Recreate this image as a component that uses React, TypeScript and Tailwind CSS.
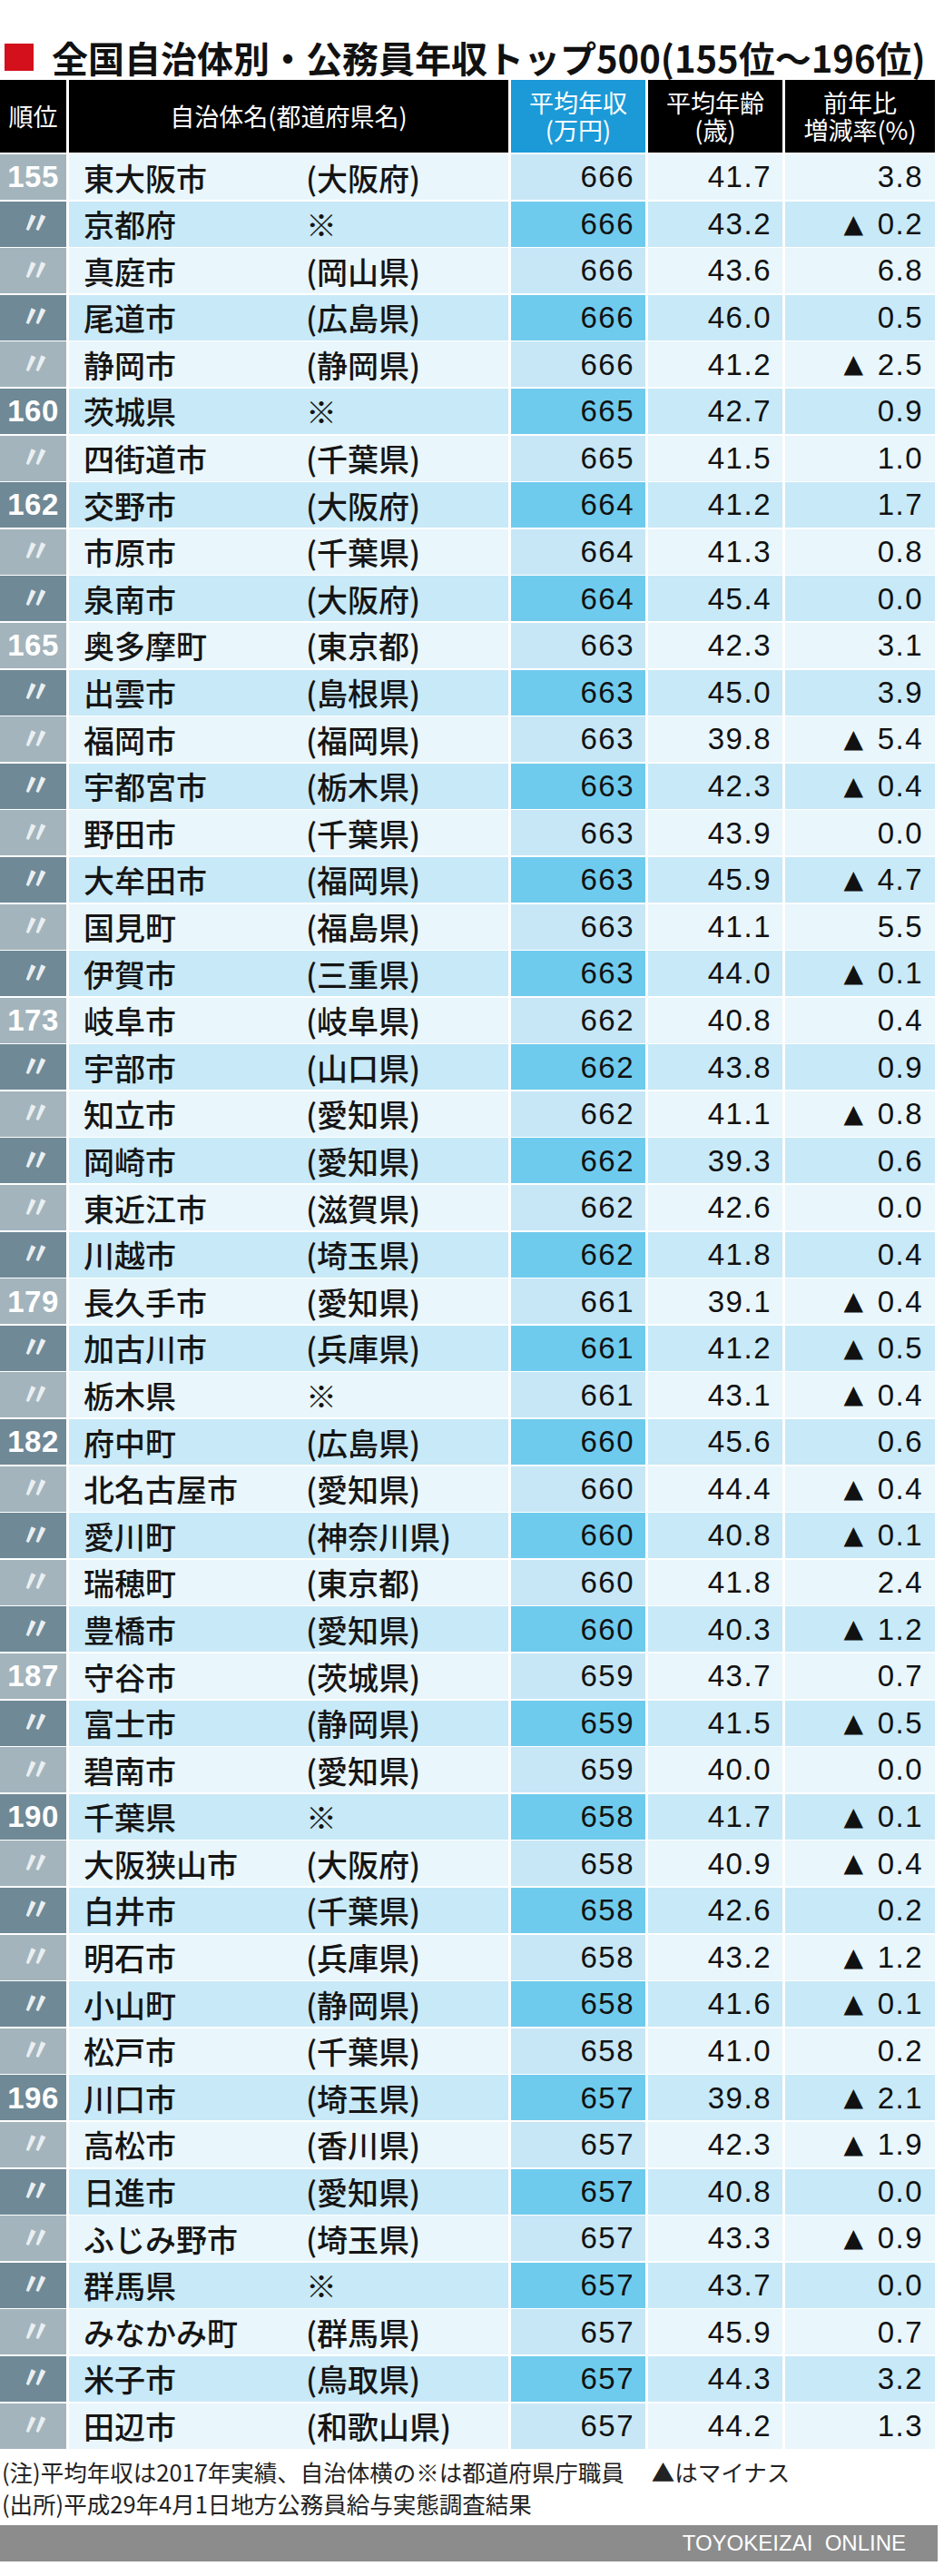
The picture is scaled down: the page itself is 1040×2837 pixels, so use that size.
import React from 'react'

type Row = {
  rank: string
  name: string
  pref: string
  salary: string
  age: string
  change: string
}

// rank: 数字 or '' (〃), change: '-' prefix means ▲
const rows: [string, string, string, string, string, string][] = [
  ['155', '東大阪市', '(大阪府)', '666', '41.7', '3.8'],
  ['', '京都府', '※', '666', '43.2', '-0.2'],
  ['', '真庭市', '(岡山県)', '666', '43.6', '6.8'],
  ['', '尾道市', '(広島県)', '666', '46.0', '0.5'],
  ['', '静岡市', '(静岡県)', '666', '41.2', '-2.5'],
  ['160', '茨城県', '※', '665', '42.7', '0.9'],
  ['', '四街道市', '(千葉県)', '665', '41.5', '1.0'],
  ['162', '交野市', '(大阪府)', '664', '41.2', '1.7'],
  ['', '市原市', '(千葉県)', '664', '41.3', '0.8'],
  ['', '泉南市', '(大阪府)', '664', '45.4', '0.0'],
  ['165', '奥多摩町', '(東京都)', '663', '42.3', '3.1'],
  ['', '出雲市', '(島根県)', '663', '45.0', '3.9'],
  ['', '福岡市', '(福岡県)', '663', '39.8', '-5.4'],
  ['', '宇都宮市', '(栃木県)', '663', '42.3', '-0.4'],
  ['', '野田市', '(千葉県)', '663', '43.9', '0.0'],
  ['', '大牟田市', '(福岡県)', '663', '45.9', '-4.7'],
  ['', '国見町', '(福島県)', '663', '41.1', '5.5'],
  ['', '伊賀市', '(三重県)', '663', '44.0', '-0.1'],
  ['173', '岐阜市', '(岐阜県)', '662', '40.8', '0.4'],
  ['', '宇部市', '(山口県)', '662', '43.8', '0.9'],
  ['', '知立市', '(愛知県)', '662', '41.1', '-0.8'],
  ['', '岡崎市', '(愛知県)', '662', '39.3', '0.6'],
  ['', '東近江市', '(滋賀県)', '662', '42.6', '0.0'],
  ['', '川越市', '(埼玉県)', '662', '41.8', '0.4'],
  ['179', '長久手市', '(愛知県)', '661', '39.1', '-0.4'],
  ['', '加古川市', '(兵庫県)', '661', '41.2', '-0.5'],
  ['', '栃木県', '※', '661', '43.1', '-0.4'],
  ['182', '府中町', '(広島県)', '660', '45.6', '0.6'],
  ['', '北名古屋市', '(愛知県)', '660', '44.4', '-0.4'],
  ['', '愛川町', '(神奈川県)', '660', '40.8', '-0.1'],
  ['', '瑞穂町', '(東京都)', '660', '41.8', '2.4'],
  ['', '豊橋市', '(愛知県)', '660', '40.3', '-1.2'],
  ['187', '守谷市', '(茨城県)', '659', '43.7', '0.7'],
  ['', '富士市', '(静岡県)', '659', '41.5', '-0.5'],
  ['', '碧南市', '(愛知県)', '659', '40.0', '0.0'],
  ['190', '千葉県', '※', '658', '41.7', '-0.1'],
  ['', '大阪狭山市', '(大阪府)', '658', '40.9', '-0.4'],
  ['', '白井市', '(千葉県)', '658', '42.6', '0.2'],
  ['', '明石市', '(兵庫県)', '658', '43.2', '-1.2'],
  ['', '小山町', '(静岡県)', '658', '41.6', '-0.1'],
  ['', '松戸市', '(千葉県)', '658', '41.0', '0.2'],
  ['196', '川口市', '(埼玉県)', '657', '39.8', '-2.1'],
  ['', '高松市', '(香川県)', '657', '42.3', '-1.9'],
  ['', '日進市', '(愛知県)', '657', '40.8', '0.0'],
  ['', 'ふじみ野市', '(埼玉県)', '657', '43.3', '-0.9'],
  ['', '群馬県', '※', '657', '43.7', '0.0'],
  ['', 'みなかみ町', '(群馬県)', '657', '45.9', '0.7'],
  ['', '米子市', '(鳥取県)', '657', '44.3', '3.2'],
  ['', '田辺市', '(和歌山県)', '657', '44.2', '1.3'],
]

const data: Row[] = rows.map(([rank, name, pref, salary, age, change]) => ({
  rank,
  name,
  pref,
  salary,
  age,
  change,
}))

const jp = "font-['Noto_Sans_CJK_JP','Noto_Sans',sans-serif]"
const num = "font-['Liberation_Sans',Arial,sans-serif]"

function TableRow({ row, dark }: { row: Row; dark: boolean }) {
  const cell = dark ? 'bg-[#c8e9f7]' : 'bg-[#e9f6fc]'
  const neg = row.change.startsWith('-')
  const change = neg ? row.change.slice(1) : row.change
  return (
    <>
      <div
        className={`flex h-[50px] items-center justify-center ${dark ? 'bg-[#6f8996]' : 'bg-[#a3b4bc]'}`}
      >
        {row.rank ? (
          <span className={`${num} text-[33px] font-bold tracking-[0.5px] text-white`}>{row.rank}</span>
        ) : (
          <span className={`${jp} ml-[6px] -translate-y-[4px] text-[35px] font-bold leading-[35px] text-[#eaeff2]`}>〃</span>
        )}
      </div>
      <div className={`flex h-[50px] items-center ${cell} ${jp} text-[34px] font-medium text-[#151515]`}>
        <span className="w-[261px] shrink-0 pl-[16px]">{row.name}</span>
        <span>{row.pref}</span>
      </div>
      <div
        className={`flex h-[50px] items-center justify-end pr-[12px] ${dark ? 'bg-[#6fcbed]' : 'bg-[#c7e7f6]'} ${num} text-[33px] tracking-[1.5px] text-[#111]`}
      >
        {row.salary}
      </div>
      <div className={`flex h-[50px] items-center justify-end pr-[12px] ${cell} ${num} text-[33px] tracking-[1.5px] text-[#111]`}>
        {row.age}
      </div>
      <div className={`flex h-[50px] items-center justify-end pr-[13px] ${cell} ${num} text-[33px] tracking-[1.5px] text-[#111]`}>
        {neg && (
          <span className="mr-[14px] font-['DejaVu_Sans',sans-serif] text-[28px] leading-none">▲</span>
        )}
        {change}
      </div>
    </>
  )
}

export default function App() {
  return (
    <div className="h-[2837px] w-[1040px] overflow-hidden bg-white">
      <div className="mt-[40px] flex h-[46px] items-center">
        <div className="ml-[5px] h-[30px] w-[32px] shrink-0 bg-[#d3101c]" />
        <h1 className={`${jp} ml-[20px] whitespace-nowrap text-[40px] font-bold leading-none text-[#111]`}>
          全国自治体別・公務員年収トップ500(155位～196位)
        </h1>
      </div>

      <div className="mt-[2px] w-[1033px]">
        <div className={`grid h-[80px] grid-cols-[73px_484px_148px_148px_165px] gap-x-[3px] ${jp} text-[27px] leading-[30px] text-white`}>
          <div className="flex items-center justify-center bg-black">順位</div>
          <div className="flex items-center justify-center bg-black">自治体名(都道府県名)</div>
          <div className="flex flex-col items-center justify-center bg-[#1b9ad7]">
            <span>平均年収</span>
            <span>(万円)</span>
          </div>
          <div className="flex flex-col items-center justify-center bg-black">
            <span>平均年齢</span>
            <span>(歳)</span>
          </div>
          <div className="flex flex-col items-center justify-center bg-black">
            <span>前年比</span>
            <span>増減率(%)</span>
          </div>
        </div>

        <div className="mt-[2px] grid grid-cols-[73px_484px_148px_148px_165px] gap-x-[3px] gap-y-[1.6px]">
          {data.map((row, i) => (
            <TableRow key={i} row={row} dark={i % 2 === 1} />
          ))}
        </div>
      </div>

      <div className={`mt-[7px] pl-[2px] ${jp} text-[25.5px] leading-[35px] text-[#222]`}>
        <p>
          (注)平均年収は2017年実績、自治体横の※は都道府県庁職員
          <span className="ml-[30px]">▲はマイナス</span>
        </p>
        <p>(出所)平成29年4月1日地方公務員給与実態調査結果</p>
      </div>

      <div className="mt-[7px] flex h-[40px] w-[1033px] items-center justify-end bg-[#8c8c8c] pr-[35px]">
        <span className={`${num} whitespace-pre text-[24px] text-white`}>TOYOKEIZAI  ONLINE</span>
      </div>
    </div>
  )
}
